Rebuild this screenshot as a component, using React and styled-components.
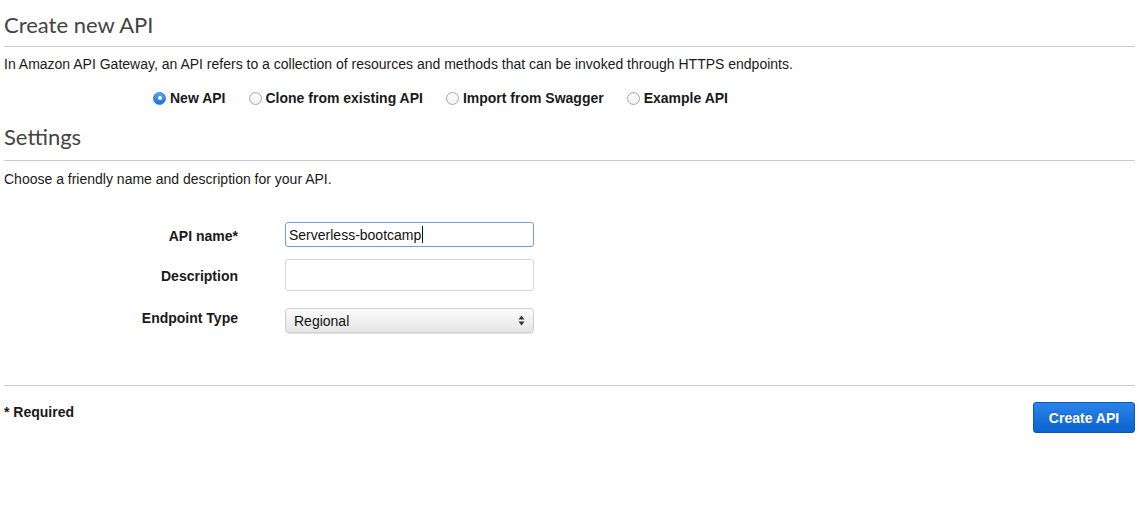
import styled, { createGlobalStyle } from "styled-components";

const GlobalStyle = createGlobalStyle`
  html, body {
    margin: 0;
    background: #fff;
  }
  body {
    font-family: "Liberation Sans", Arial, sans-serif;
    font-size: 14px;
    color: #1a1a1a;
  }
`;

const radios = [
  { label: "New API", checked: true },
  { label: "Clone from existing API" },
  { label: "Import from Swagger" },
  { label: "Example API" },
];

const App = () => {
  return (
    <Page>
      <GlobalStyle />
      <Heading pt={10} pb={6}>Create new API</Heading>
      <Paragraph top={8}>
        In Amazon API Gateway, an API refers to a collection of resources and
        methods that can be invoked through HTTPS endpoints.
      </Paragraph>
      <RadioRow>
        {radios.map((r) => (
          <RadioItem key={r.label}>
            <RadioDot checked={r.checked} />
            {r.label}
          </RadioItem>
        ))}
      </RadioRow>

      <Heading top={6} pt={9} pb={8}>Settings</Heading>
      <Paragraph top={9}>
        Choose a friendly name and description for your API.
      </Paragraph>

      <Form>
        <Label shift={1}>API name*</Label>
        <Field focused h={25}>
          Serverless-bootcamp
          <Caret />
        </Field>
        <Label shift={-2}>Description</Label>
        <Field h={32} />
        <Label shift={-3}>Endpoint Type</Label>
        <Select>
          Regional
          <Arrows>
            <svg width="7" height="11" viewBox="0 0 7 11">
              <path d="M3.5 0.5 L6.5 4.5 L0.5 4.5 Z" fill="#333" />
              <path d="M3.5 10.5 L6.5 6.5 L0.5 6.5 Z" fill="#333" />
            </svg>
          </Arrows>
        </Select>
      </Form>

      <Footer>
        <Required>* Required</Required>
        <Button>Create API</Button>
      </Footer>
    </Page>
  );
};

const Page = styled.div`
  padding: 0 7px 40px 4px;
`;

const Heading = styled.h1`
  margin: ${(p) => p.top || 0}px 0 0;
  padding: ${(p) => p.pt}px 0 ${(p) => p.pb}px;
  font-family: Lato, "Open Sans", sans-serif;
  font-weight: 400;
  font-size: 22px;
  line-height: 30px;
  color: #444;
  border-bottom: 1px solid #ccc;
`;

const Paragraph = styled.p`
  margin: ${(p) => p.top || 0}px 0 0;
  line-height: 18px;
`;

const RadioRow = styled.div`
  display: flex;
  gap: 23px;
  margin-top: 16px;
  padding-left: 149px;
  line-height: 18px;
`;

const RadioItem = styled.label`
  display: flex;
  align-items: center;
  gap: 4px;
  font-weight: 700;
  color: #1a1a1a;
`;

const RadioDot = styled.span`
  box-sizing: border-box;
  width: 13px;
  height: 13px;
  border-radius: 50%;
  position: relative;
  border: 1px solid ${(p) => (p.checked ? "#2f7fe0" : "#a8a8a8")};
  background: ${(p) =>
    p.checked
      ? "linear-gradient(#5aa5f5, #1b70e0)"
      : "linear-gradient(#fff, #f0f0f0)"};

  &::after {
    content: "";
    display: ${(p) => (p.checked ? "block" : "none")};
    position: absolute;
    left: 3.5px;
    top: 3.5px;
    width: 4px;
    height: 4px;
    border-radius: 50%;
    background: #fff;
  }
`;

const Form = styled.div`
  display: grid;
  grid-template-columns: 234px 249px;
  column-gap: 47px;
  row-gap: 12px;
  align-items: center;
  margin-top: 34px;

  & > :nth-child(4) {
    margin-bottom: 5px;
  }
`;

const Label = styled.div`
  text-align: right;
  font-weight: 700;
  line-height: 18px;
  position: relative;
  top: ${(p) => p.shift || 0}px;
`;

const Field = styled.div`
  box-sizing: border-box;
  height: ${(p) => p.h}px;
  display: flex;
  align-items: center;
  padding: 0 3px;
  font-size: 14px;
  color: #111;
  border: 1px solid ${(p) => (p.focused ? "#6aa1db" : "#d5d5d5")};
  border-radius: 3px;
  background: #fff;
`;

const Caret = styled.span`
  width: 1px;
  height: 17px;
  background: #111;
  margin-left: 1px;
`;

const Select = styled.div`
  box-sizing: border-box;
  height: 25px;
  display: flex;
  align-items: center;
  justify-content: space-between;
  padding: 0 8px 0 8px;
  font-size: 14px;
  color: #111;
  border: 1px solid #d0d0d0;
  border-radius: 4px;
  background: linear-gradient(#fbfbfb, #e6e6e6);
  box-shadow: 0 1px 1px rgba(0, 0, 0, 0.12);
`;

const Arrows = styled.span`
  display: flex;
  align-items: center;
`;

const Footer = styled.div`
  display: flex;
  justify-content: space-between;
  align-items: flex-start;
  margin-top: 52px;
  padding-top: 16px;
  border-top: 1px solid #ccc;
`;

const Required = styled.div`
  font-weight: 700;
  line-height: 18px;
  margin-top: 1px;
`;

const Button = styled.button`
  box-sizing: border-box;
  width: 102px;
  height: 31px;
  font-family: "Liberation Sans", Arial, sans-serif;
  font-size: 14px;
  font-weight: 700;
  color: #fff;
  border: 1px solid #0b56b3;
  border-radius: 3px;
  background: linear-gradient(#2b84e8, #0a63cf);
  text-shadow: 0 -1px 0 rgba(0, 0, 0, 0.2);
  cursor: pointer;
`;

export default App;
